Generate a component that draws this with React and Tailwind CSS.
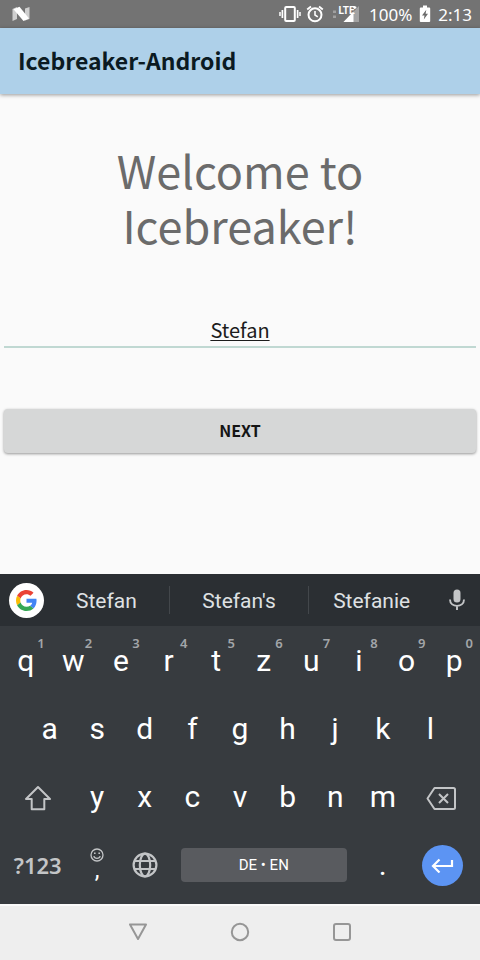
import React, { useState } from "react";

const topRow = [
  ["q", "1"], ["w", "2"], ["e", "3"], ["r", "4"], ["t", "5"],
  ["z", "6"], ["u", "7"], ["i", "8"], ["o", "9"], ["p", "0"],
];
const homeRow = ["a", "s", "d", "f", "g", "h", "j", "k", "l"];
const bottomRow = ["y", "x", "c", "v", "b", "n", "m"];

function StatusBar() {
  return (
    <div className="flex h-7 items-center bg-[#737373] pr-2 pl-3 font-['Noto_Sans',sans-serif] text-[17px] leading-7 text-white">
      <svg className="h-4 w-[18px]" viewBox="0 0 18 16" aria-hidden="true">
        <path d="M0.5 3L5 1V13L0.5 15Z" fill="#cfcfcf" />
        <path d="M13 2.5L17.5 1V13L13 14.5Z" fill="#cfcfcf" />
        <path d="M1.5 3.2L7.5 0.8L17 12.6L11.5 15Z" fill="#fff" />
      </svg>
      <div className="ml-auto flex items-center">
        <svg className="h-5 w-[22px]" viewBox="0 0 22 20" fill="none" stroke="#fff" aria-hidden="true">
          <rect x="6.2" y="3" width="9.6" height="14" rx="1" strokeWidth="2" />
          <path d="M3.4 6V14M18.6 6V14" strokeWidth="1.7" />
          <path d="M1 8V12M21 8V12" strokeWidth="1.5" />
        </svg>
        <svg className="ml-1 h-5 w-5" viewBox="0 0 20 20" fill="none" stroke="#fff" aria-hidden="true">
          <circle cx="10" cy="10.8" r="6.5" strokeWidth="2" />
          <path d="M10 7V11L12.8 12.8" strokeWidth="1.6" />
          <path d="M2.2 5.4L6 2.4M17.8 5.4L14 2.4" strokeWidth="1.9" />
        </svg>
        <svg className="ml-1 h-5 w-8" viewBox="0 0 32 20" aria-hidden="true">
          <path d="M4 6.5H7V9H4ZM4 11.5H7V14H4Z" fill="#a0a0a0" />
          <path d="M30 2V18H14.5Z" fill="#a3a3a3" />
          <path d="M24.5 7.5V18H14.5Z" fill="#fff" />
          <text x="9.5" y="9.5" fill="#fff" fontSize="10" fontWeight="700" fontFamily="Liberation Sans Narrow, Roboto, sans-serif">LTE</text>
          <path d="M24.2 3.5H27.4M25.8 1.9V5.1" stroke="#fff" strokeWidth="1.3" />
        </svg>
        <span className="ml-2 pt-px">100%</span>
        <svg className="mx-[7px] h-[18px] w-3" viewBox="0 0 12 18" aria-hidden="true">
          <path d="M4 0.5H8V2.5H10.2Q11.2 2.5 11.2 3.5V16.2Q11.2 17 10.2 17H1.8Q0.8 17 0.8 16.2V3.5Q0.8 2.5 1.8 2.5H4Z" fill="#fff" />
          <path d="M7.3 4.8L3 10.6H5.5L4.8 14.6L9 8.8H6.6Z" fill="#6b6b6b" />
        </svg>
        <span className="pt-px">2:13</span>
      </div>
    </div>
  );
}

function LetterKey({ letter, hint }) {
  return (
    <button type="button" className="relative col-span-2 text-3xl text-white">
      {letter}
      {hint && (
        <span className="absolute top-2 right-[5px] font-['Noto_Sans',sans-serif] text-[13px] leading-4 font-semibold text-[#a3a6a9]">
          {hint}
        </span>
      )}
    </button>
  );
}

function Suggestions() {
  return (
    <div className="flex h-[52px] items-center bg-[#2b2f33] text-[21px] text-[#dfe1e3]">
      <button type="button" aria-label="Google search" className="ml-[9px] flex size-[35px] items-center justify-center rounded-full bg-white">
        <svg className="size-[21px]" viewBox="0 0 48 48" aria-hidden="true">
          <path fill="#EA4335" d="M24 9.5c3.54 0 6.71 1.22 9.21 3.6l6.85-6.85C35.9 2.38 30.47 0 24 0 14.62 0 6.51 5.38 2.56 13.22l7.98 6.19C12.43 13.72 17.74 9.5 24 9.5z" />
          <path fill="#4285F4" d="M46.98 24.55c0-1.57-.15-3.09-.38-4.55H24v9.02h12.94c-.58 2.96-2.26 5.48-4.78 7.18l7.73 6c4.51-4.18 7.09-10.36 7.09-17.65z" />
          <path fill="#FBBC05" d="M10.53 28.59c-.48-1.45-.76-2.99-.76-4.59s.27-3.14.76-4.59l-7.98-6.19C.92 16.46 0 20.12 0 24c0 3.88.92 7.54 2.56 10.78l7.97-6.19z" />
          <path fill="#34A853" d="M24 48c6.48 0 11.93-2.13 15.89-5.81l-7.73-6c-2.15 1.45-4.92 2.3-8.16 2.3-6.26 0-11.57-4.22-13.47-9.91l-7.98 6.19C6.51 42.62 14.62 48 24 48z" />
        </svg>
      </button>
      <div className="flex h-7 flex-1 divide-x divide-[#43474b]">
        <button type="button" className="flex-[9]">Stefan</button>
        <button type="button" className="flex-[10]">Stefan's</button>
        <button type="button" className="flex-[9]">Stefanie</button>
      </div>
      <button type="button" aria-label="Voice input" className="mx-3">
        <svg className="size-[22px]" viewBox="0 0 22 22" aria-hidden="true">
          <rect x="7.5" y="0.5" width="7" height="13" rx="3.5" fill="#c3c5c7" />
          <path d="M4 10.5C4 19 18 19 18 10.5M11 16.5V21" fill="none" stroke="#c3c5c7" strokeWidth="1.9" />
        </svg>
      </button>
    </div>
  );
}

function Keyboard() {
  return (
    <section aria-label="Keyboard" className="bg-[#373b3f] font-[Roboto,sans-serif]">
      <Suggestions />
      <div className="grid auto-rows-[68px] grid-cols-20 px-[2px] pt-px pb-[5px]">
        {topRow.map(([letter, hint]) => (
          <LetterKey key={letter} letter={letter} hint={hint} />
        ))}
        <span />
        {homeRow.map((letter) => (
          <LetterKey key={letter} letter={letter} />
        ))}
        <span />
        <button type="button" aria-label="Shift" className="col-span-3 flex items-center justify-center">
          <svg className="h-7 w-7" viewBox="0 0 28 28" fill="none" stroke="#c3c5c7" strokeWidth="2" strokeLinejoin="round" aria-hidden="true">
            <path d="M14 4L26 16H20.3V26.3H7.7V16H2Z" />
          </svg>
        </button>
        {bottomRow.map((letter) => (
          <LetterKey key={letter} letter={letter} />
        ))}
        <button type="button" aria-label="Backspace" className="col-span-3 flex items-center justify-center">
          <svg className="h-[26px] w-8" viewBox="0 0 32 26" fill="none" stroke="#c3c5c7" strokeWidth="2" strokeLinejoin="round" aria-hidden="true">
            <path d="M8.5 4H27.5Q29 4 29 5.5V23.5Q29 25 27.5 25H8.5L1.5 14.5Z" />
            <path d="M13 10L22 19M22 10L13 19" />
          </svg>
        </button>
        <button type="button" className="col-span-3 font-['Noto_Sans',sans-serif] text-[22px] font-semibold text-[#c3c5c7]">
          ?123
        </button>
        <button type="button" aria-label="Comma and emoji" className="col-span-2 flex flex-col items-center pt-[17px] text-2xl leading-4 text-white">
          <svg className="size-[14px] shrink-0" viewBox="0 0 14 14" fill="none" stroke="#c3c5c7" strokeWidth="1.3" aria-hidden="true">
            <circle cx="7" cy="7" r="6" />
            <path d="M3.8 8.2C4.6 11.2 9.4 11.2 10.2 8.2" />
            <path d="M4 5.2H5.6M8.4 5.2H10" strokeWidth="1.6" />
          </svg>
          <span>,</span>
        </button>
        <button type="button" aria-label="Change language" className="col-span-2 flex items-center justify-center">
          <svg className="size-[26px]" viewBox="0 0 26 26" fill="none" stroke="#c3c5c7" strokeWidth="2.2" aria-hidden="true">
            <circle cx="13" cy="13" r="11.4" />
            <ellipse cx="13" cy="13" rx="5.2" ry="11.4" />
            <path d="M2.5 9H23.5M2.5 17H23.5" />
          </svg>
        </button>
        <button type="button" className="col-span-8 mx-3 h-[34px] self-center rounded bg-[#595b5f] text-[15px] text-white">
          DE • EN
        </button>
        <button type="button" className="col-span-2 text-3xl text-white">
          .
        </button>
        <button type="button" aria-label="Enter" className="col-span-3 flex items-center justify-center">
          <span className="flex size-[41px] items-center justify-center rounded-full bg-[#5c94f3]">
            <svg className="h-4 w-6" viewBox="0 0 24 16" fill="none" stroke="#fff" strokeWidth="2.2" aria-hidden="true">
              <path d="M22 3V9H3M9.5 2.5L3 9L9.5 15.5" />
            </svg>
          </span>
        </button>
      </div>
    </section>
  );
}

function NavBar() {
  return (
    <nav className="flex h-14 items-center justify-center gap-[76px] border-t-2 border-[#fafafa] bg-[#eeeeee] pb-[2px]">
      <button type="button" aria-label="Back">
        <svg className="size-[26px]" viewBox="0 0 26 26" fill="none" stroke="#969696" strokeWidth="2" strokeLinejoin="round" aria-hidden="true">
          <path d="M5 5.5H21L13 20Z" />
        </svg>
      </button>
      <button type="button" aria-label="Home">
        <svg className="size-[26px]" viewBox="0 0 26 26" fill="none" stroke="#969696" strokeWidth="2" aria-hidden="true">
          <circle cx="13" cy="13" r="8.2" />
        </svg>
      </button>
      <button type="button" aria-label="Recent apps">
        <svg className="size-[26px]" viewBox="0 0 26 26" fill="none" stroke="#969696" strokeWidth="2" aria-hidden="true">
          <rect x="5" y="5" width="16" height="16" rx="2" />
        </svg>
      </button>
    </nav>
  );
}

export default function App() {
  const [name, setName] = useState("Stefan");
  return (
    <div className="flex min-h-screen flex-col bg-[#fafafa] font-['Noto_Sans_CJK_SC',sans-serif]">
      <StatusBar />
      <header className="flex h-[66px] items-center bg-[#aed0e9] px-[18px] pb-[2px] shadow-[0_1px_4px_rgba(0,0,0,0.4)]">
        <h1 className="text-[23px] leading-8 font-bold text-[#0b1a22]">Icebreaker-Android</h1>
      </header>
      <main className="flex flex-1 flex-col px-1 pt-12">
        <h2 className="mx-auto max-w-[300px] text-center text-[45px] leading-[55px] text-[#6b6b6b]">
          Welcome to Icebreaker!
        </h2>
        <input
          type="text"
          aria-label="Name"
          value={name}
          onChange={(event) => setName(event.target.value)}
          className="mt-[60px] h-9 w-full border-b-2 border-[#c0d8d2] bg-transparent text-center text-xl text-[#1c1c1c] underline decoration-1 underline-offset-2 outline-none"
        />
        <button
          type="button"
          className="mt-[61px] h-11 w-full rounded-sm bg-[#d6d7d7] pb-[2px] text-base font-bold text-[#151515] shadow-[0_1px_3px_rgba(0,0,0,0.4)]"
        >
          NEXT
        </button>
      </main>
      <Keyboard />
      <NavBar />
    </div>
  );
}
